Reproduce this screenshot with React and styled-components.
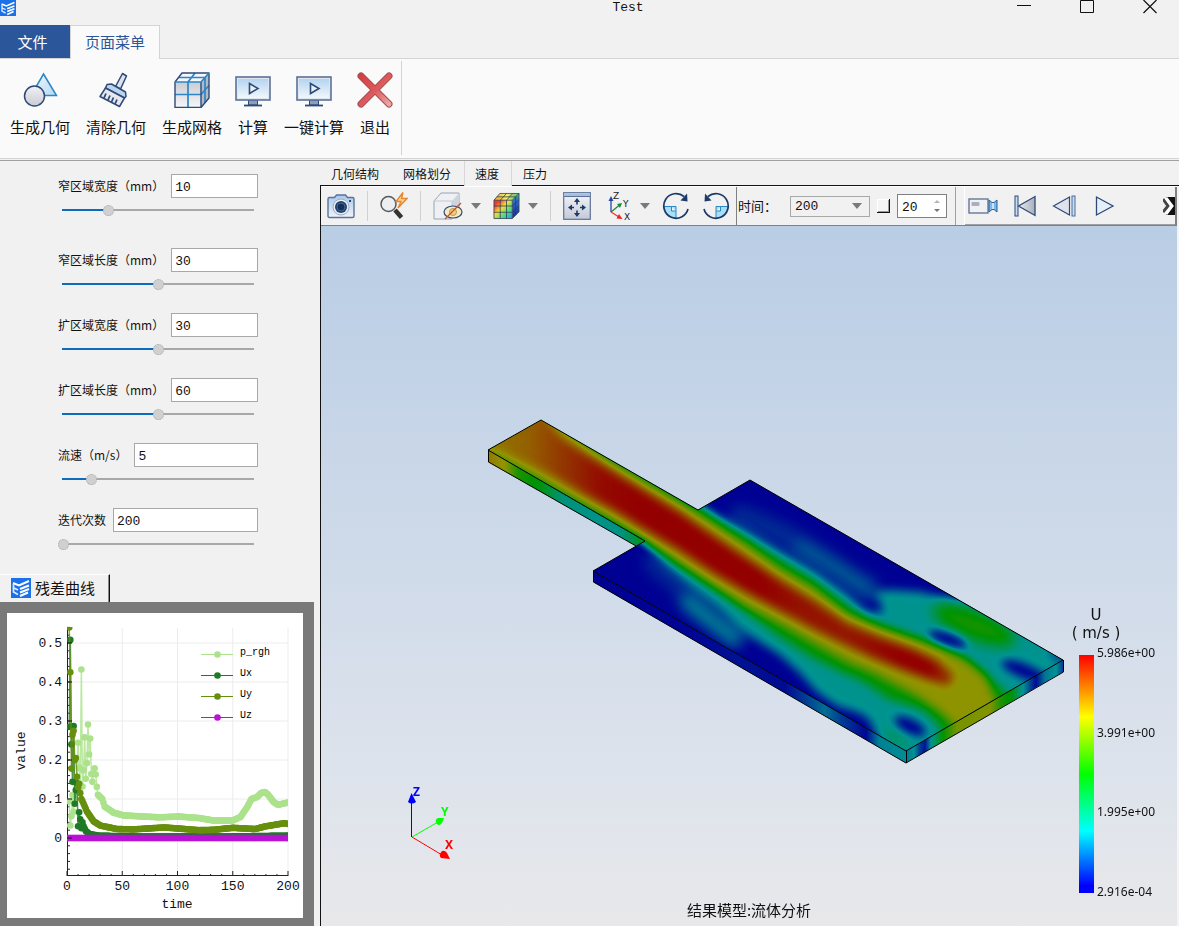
import { useState } from "react";
import styled, { createGlobalStyle } from "styled-components";

const cjk = `"Noto Sans CJK SC", "Noto Sans", sans-serif`;
const mono = `"Liberation Mono", "Noto Sans CJK SC", monospace`;
const navy = "#2f4a78";

/* ---------- ribbon icons ---------- */

function ShapesIcon() {
  return (
    <svg width="36" height="36" viewBox="0 0 36 36">
      <defs>
        <linearGradient id="tri" x1="0" y1="0" x2="1" y2="1">
          <stop offset="0" stopColor="#f4f9fd" />
          <stop offset="1" stopColor="#b5d9f3" />
        </linearGradient>
        <linearGradient id="ball" x1="0" y1="0" x2="0" y2="1">
          <stop offset="0" stopColor="#f2f2f4" />
          <stop offset="1" stopColor="#c9ccd4" />
        </linearGradient>
      </defs>
      <path d="M21.500 2 L34.500 23.500 H9 Z" fill="url(#tri)" stroke="#2b86c5" strokeWidth="1.500" />
      <circle cx="12.500" cy="24" r="10" fill="url(#ball)" stroke={navy} strokeWidth="1.500" />
    </svg>
  );
}

function BrushIcon() {
  return (
    <svg width="36" height="36" viewBox="0 0 36 36" strokeLinejoin="round">
      <path d="M24.500 1.500 L28.500 4 L22.500 17 L17.500 14.500 Z" fill="#dde3ec" stroke={navy} strokeWidth="1.500" />
      <path d="M9 12.500 L13.500 12 L27.500 20 L28 24.500 L26.500 26 L7.500 16 Z" fill="#b9d4ee" stroke={navy} strokeWidth="1.500" />
      <path d="M7.500 16 L26.500 26 L21.500 34.500 L2 24.500 Z" fill="#e6e8ee" stroke={navy} strokeWidth="1.500" />
      <path d="M6 26 L8 21.500 M10 28 L12 23.500 M13.500 30 L15.500 25.500 M17 32 L19 27.500" stroke={navy} strokeWidth="1.800" />
    </svg>
  );
}

function MeshIcon() {
  return (
    <svg width="36" height="36" viewBox="0 0 36 36" strokeLinejoin="round">
      <defs>
        <linearGradient id="mesh" x1="0" y1="0" x2="0" y2="1">
          <stop offset="0" stopColor="#c9ccd4" />
          <stop offset="1" stopColor="#f6f7f9" />
        </linearGradient>
      </defs>
      <path d="M1 10 L8 1 H35 L27 10 Z" fill="#f4f6f9" />
      <path d="M27 10 L35 1 V26 L27 35.500 Z" fill="#b4bac6" />
      <path d="M1 10 H27 V35.500 H1 Z" fill="url(#mesh)" />
      <path d="M1 22.500 H27 L35 13.500 M14 35.500 V10 L21 1 M5 5.500 H31 V31" fill="none" stroke="#2b86c5" strokeWidth="1.700" />
      <path d="M1 10 L8 1 H35 V26 L27 35.500 H1 Z M27 10 V35.500" fill="none" stroke={navy} strokeWidth="1.400" />
      <path d="M1 10 H27 L35 1" fill="none" stroke="#2b86c5" strokeWidth="1.700" />
    </svg>
  );
}

function MonitorIcon() {
  return (
    <svg width="36" height="36" viewBox="0 0 36 36">
      <defs>
        <linearGradient id="screen" x1="0" y1="0" x2="0" y2="1">
          <stop offset="0" stopColor="#b4d4f0" />
          <stop offset="1" stopColor="#f1f7fc" />
        </linearGradient>
      </defs>
      <path d="M13.500 28 H22.500 V33 H13.500 Z" fill="#8e9db8" stroke={navy} />
      <path d="M9 33.500 H27" stroke={navy} strokeWidth="1.800" />
      <rect x="1" y="5" width="34" height="23" fill="#dfe5ee" stroke="#5b7299" strokeWidth="1.600" />
      <rect x="3" y="7" width="30" height="19" fill="url(#screen)" />
      <path d="M14.500 11.500 L23 16.500 L14.500 21.500 Z" fill="#e9f2fa" stroke={navy} strokeWidth="1.600" />
    </svg>
  );
}

function CrossIcon() {
  return (
    <svg width="36" height="36" viewBox="0 0 36 36" strokeLinecap="round">
      <defs>
        <linearGradient id="cross" gradientUnits="userSpaceOnUse" x1="4" y1="0" x2="34" y2="30">
          <stop offset="0" stopColor="#d33c40" />
          <stop offset="0.550" stopColor="#dd5a5c" />
          <stop offset="1" stopColor="#eba6a6" />
        </linearGradient>
      </defs>
      <path d="M4 4 L32 32 M32 4 L4 32" stroke="#a84c50" strokeWidth="7" />
      <path d="M4 4 L32 32 M32 4 L4 32" stroke="url(#cross)" strokeWidth="5" />
    </svg>
  );
}

function LogoIcon({ size }) {
  return (
    <svg width={size} height={size} viewBox="0 0 20 20">
      <rect width="20" height="20" fill="#1b72e8" />
      <path d="M2 5 L8 7.500 L18 3 M9 11 L18 7.500 M9 14.500 L18 11 M9 18 L17 14.500" stroke="#fff" strokeWidth="2" fill="none" />
      <path d="M2.500 6 V14 L7 16.500 M3 10 L7 12" stroke="#dfeafc" strokeWidth="1.700" fill="none" />
    </svg>
  );
}

/* ---------- toolbar icons ---------- */

function CameraIcon() {
  return (
    <svg width="28" height="28" viewBox="0 0 28 28">
      <defs>
        <linearGradient id="cam" x1="0" y1="0" x2="0" y2="1">
          <stop offset="0" stopColor="#a9c8ea" />
          <stop offset="1" stopColor="#eef4fb" />
        </linearGradient>
      </defs>
      <path d="M1 7 Q1 5.500 2.500 5.500 H7.500 L9.500 3 H18.500 L20.500 5.500 H25.500 Q27 5.500 27 7 V24 Q27 25.500 25.500 25.500 H2.500 Q1 25.500 1 24 Z" fill="url(#cam)" stroke="#5b7299" strokeWidth="1.400" />
      <circle cx="14" cy="15" r="8" fill="#e9eef5" stroke="#9aabc4" />
      <circle cx="14" cy="15" r="6" fill="#1c3f6e" />
      <circle cx="14" cy="15" r="4" fill="#16305a" stroke="#44699a" />
      <rect x="22" y="8" width="2" height="2" fill="#2a4674" />
    </svg>
  );
}

function ZoomIcon() {
  return (
    <svg width="28" height="28" viewBox="0 0 28 28">
      <path d="M15 18 L21.500 25.500" stroke="#333" strokeWidth="4.500" />
      <circle cx="8.500" cy="12" r="7.500" fill="#eceef0" stroke="#555a60" strokeWidth="1.500" />
      <path d="M23 .5 L16 9.500 H21 L18 16 L27 6.500 H21.500 Z" fill="#fbd79a" stroke="#e8862a" strokeWidth="1.400" />
    </svg>
  );
}

function HiddenCubeIcon() {
  return (
    <svg width="30" height="28" viewBox="0 0 30 28" strokeLinejoin="round">
      <path d="M1 9 L8 1 H26 V20 L19 27 H1 Z" fill="#eef0f3" stroke="#9aa3b3" />
      <path d="M19 9 L26 1 V20 L19 27 Z" fill="#cfd4dc" />
      <path d="M1 9 H19 V27" fill="none" stroke="#c3c9d4" />
      <ellipse cx="20" cy="20" rx="9" ry="6" fill="#f9e7bd" stroke={navy} strokeWidth="1.200" />
      <circle cx="20" cy="20" r="3.500" fill="#f0cf7e" stroke="#b59a56" />
      <path d="M12 27 L28 11" stroke="#c9502f" strokeWidth="1.300" />
    </svg>
  );
}

function FieldCubeIcon() {
  return (
    <svg width="27" height="28" viewBox="0 0 28 28">
      <defs>
        <linearGradient id="cubeFront" x1="0" y1="0" x2="1" y2="1">
          <stop offset="0.150" stopColor="#e83c2e" />
          <stop offset="0.420" stopColor="#f6dc3a" />
          <stop offset="0.650" stopColor="#5fdc78" />
          <stop offset="0.950" stopColor="#23a4e8" />
        </linearGradient>
        <linearGradient id="cubeTop" x1="0" y1="0" x2="1" y2="0">
          <stop offset="0" stopColor="#f0a02c" />
          <stop offset="0.500" stopColor="#f6ee72" />
          <stop offset="1" stopColor="#4cb868" />
        </linearGradient>
        <linearGradient id="cubeSide" x1="0" y1="0" x2="0" y2="1">
          <stop offset="0" stopColor="#42b86a" />
          <stop offset="0.300" stopColor="#2a6fd8" />
          <stop offset="1" stopColor="#1426a0" />
        </linearGradient>
      </defs>
      <path d="M1 8 L7 1 H27 L20 8 Z" fill="url(#cubeTop)" />
      <path d="M20 8 L27 1 V20 L20 27 Z" fill="url(#cubeSide)" />
      <path d="M1 8 H20 V27 H1 Z" fill="url(#cubeFront)" />
      <path d="M1 8 L7 1 H27 V20 L20 27 H1 Z M1 8 H20 L27 1 M20 8 V27 M1 14 H20 L27 7.500 M1 20.500 H20 L27 14 M7.500 27 V8 L14 1 M14 27 V8 L20.500 1 M4 4.500 H23.500 V23.500" fill="none" stroke="#2c3b52" strokeWidth=".8" />
    </svg>
  );
}

function FitIcon() {
  return (
    <svg width="28" height="28" viewBox="0 0 28 28">
      <defs>
        <linearGradient id="fit" x1="0" y1="0" x2="0" y2="1">
          <stop offset="0" stopColor="#f5f6f8" />
          <stop offset="1" stopColor="#c3c9d6" />
        </linearGradient>
      </defs>
      <rect x=".7" y=".7" width="26.600" height="26.600" fill="url(#fit)" stroke="#5b7299" strokeWidth="1.200" />
      <rect x="1.500" y="1.500" width="25" height="2.500" fill="#a9bedd" />
      <path d="M1 4.500 H27" stroke="#5b7299" />
      <path d="M14 6 L17 10 H11 Z M14 25 L17 21 H11 Z M5 15.500 L9 12.500 V18.500 Z M23 15.500 L19 12.500 V18.500 Z" fill="#1d3a68" />
      <path d="M14 9 V12.500 M14 18.500 V22 M8 15.500 H11 M17 15.500 H20" stroke="#1d3a68" strokeWidth="1.600" />
    </svg>
  );
}

function AxesIcon() {
  return (
    <svg width="29" height="34" viewBox="0 0 29 34">
      <path d="M8 23 V10" stroke="#2347a8" strokeWidth="1.300" />
      <path d="M8 7 L10.500 12 H5.500 Z" fill="#2347a8" />
      <path d="M8 23 L16 16.500" stroke="#1d8a3c" strokeWidth="1.300" />
      <path d="M19 14 L17 19 L14 15 Z" fill="#1d8a3c" />
      <path d="M8 23 L16 28" stroke="#e33" strokeWidth="1.300" />
      <path d="M19.500 30 L13.500 29.500 L16 25 Z" fill="#e22" />
      <g fill="#222" fontFamily="DejaVu Sans, sans-serif" fontSize="9">
        <text x="10" y="10">Z</text>
        <text x="20" y="18">Y</text>
        <text x="21" y="31">X</text>
      </g>
    </svg>
  );
}

function RotateIcon({ flip }) {
  return (
    <svg width="28" height="28" viewBox="0 0 28 28">
      <g transform={flip ? "matrix(-1 0 0 1 28 0)" : undefined}>
        <path d="M2 14.500 H14 V26 A12 12 0 0 1 2 14.500 Z" fill="#a9defa" stroke="#2b86c5" />
        <path d="M9.500 14.500 V19 H14" fill="#e4f5fd" stroke="#2b86c5" />
        <path d="M26 17 A12.300 12.300 0 1 1 22 4.500" fill="none" stroke="#1d3a68" strokeWidth="1.700" />
        <path d="M25.500 9.500 L18.500 8.500 L25 1.500 Z" fill="#1d3a68" />
      </g>
    </svg>
  );
}

function VideoIcon() {
  return (
    <svg width="30" height="20" viewBox="0 0 30 20">
      <rect x="1" y="3" width="19" height="14" fill="#f0f1f4" stroke="#5b6f93" strokeWidth="1.300" />
      <rect x="3.500" y="6" width="8" height="4" rx="1" fill="#aab0ba" />
      <path d="M21 4 L24 6.500 H26 L29 4 V16 L26 13.500 H24 L21 16 Z" fill="#7ab8ec" stroke="#2b5f96" />
      <path d="M25 7 V13" stroke="#e6f4ff" strokeWidth="1.500" />
    </svg>
  );
}

function FirstIcon() {
  return (
    <svg width="22" height="22" viewBox="0 0 22 22">
      <defs>
        <linearGradient id="first" x1="0" y1="0" x2="1" y2="0">
          <stop offset="0" stopColor="#e9ebef" />
          <stop offset="1" stopColor="#a9afbb" />
        </linearGradient>
      </defs>
      <rect x="1" y="1" width="3" height="20" fill="#c9dcf1" stroke={navy} />
      <path d="M21 1.500 V20.500 L4.500 11 Z" fill="url(#first)" stroke={navy} strokeWidth="1.300" />
    </svg>
  );
}

function PrevIcon() {
  return (
    <svg width="24" height="22" viewBox="0 0 24 22">
      <path d="M17.500 2 V20 L1.500 11 Z" fill="#dfe4ec" stroke={navy} strokeWidth="1.200" />
      <rect x="20" y="1" width="3" height="20" fill="#c9dcf1" stroke="#4c6c9c" />
    </svg>
  );
}

function PlayIcon() {
  return (
    <svg width="24" height="22" viewBox="0 0 24 22">
      <path d="M4.500 2 V20 L21 11 Z" fill="#e6f0fa" stroke={navy} strokeWidth="1.300" />
    </svg>
  );
}

function MoreIcon() {
  return (
    <svg width="12" height="18" viewBox="0 0 12 18">
      <path d="M0 2 L5 9 L0 15" fill="none" stroke="#444" strokeWidth="3" />
      <path d="M3 0 H12 V18 H3 L9 9 Z" fill="#111" />
      <path d="M3 1 L9 9 L3 17" fill="none" stroke="#fff" strokeWidth="3" />
    </svg>
  );
}

function Caret() {
  return (
    <svg width="10" height="6" viewBox="0 0 10 6">
      <path d="M0 0 H10 L5 6 Z" fill="#7a7a7a" />
    </svg>
  );
}

/* ---------- residual chart ---------- */

const series = [
  {
    name: "p_rgh",
    color: "#abe28b",
    points: [
      [2, 0.094], [3, 0.032], [4, 0.056], [5, 0.11], [6, 0.067], [7, 0.1], [8, 0.12], [9, 0.15],
      [10, 0.244], [11, 0.18], [12, 0.13], [13, 0.432], [14, 0.132], [15, 0.174], [16, 0.258],
      [17, 0.152], [18, 0.192], [19, 0.291], [20, 0.214], [21, 0.255], [22, 0.164], [23, 0.144],
      [24, 0.165], [25, 0.179], [26, 0.163], [27, 0.131], [28, 0.111], [30, 0.105], [32, 0.1],
      [34, 0.081], [42, 0.065], [51, 0.058], [69, 0.055], [84, 0.053], [101, 0.055], [120, 0.051],
      [132, 0.045], [150, 0.045], [157, 0.054], [163, 0.079], [167, 0.1], [172, 0.105],
      [176, 0.116], [179, 0.118], [182, 0.111], [187, 0.092], [191, 0.085], [200, 0.091],
    ],
  },
  {
    name: "Ux",
    color: "#1f7a26",
    points: [
      [2, 0.285], [3, 0.508], [4, 0.24], [5, 0.144], [6, 0.287], [7, 0.088], [8, 0.123], [9, 0.14],
      [10, 0.03], [11, 0.066], [12, 0.048], [13, 0.025], [14, 0.04], [15, 0.03], [17, 0.018],
      [20, 0.011], [28, 0.006], [60, 0.004], [150, 0.004], [200, 0.006],
    ],
  },
  {
    name: "Uy",
    color: "#668f0d",
    points: [
      [2, 0.54], [3, 0.425], [4, 0.178], [5, 0.265], [6, 0.275], [7, 0.2], [8, 0.205], [9, 0.157],
      [10, 0.13], [11, 0.139], [12, 0.115], [13, 0.1], [15, 0.088], [18, 0.068], [24, 0.043],
      [30, 0.032], [45, 0.023], [60, 0.022], [88, 0.027], [120, 0.02], [133, 0.021], [150, 0.026],
      [170, 0.023], [180, 0.03], [197, 0.038], [200, 0.036],
    ],
  },
  { name: "Uz", color: "#b814d4", points: [[0, 0], [200, 0]] },
];

const px = (t) => 60 + t * 1.105;
const py = (v) => 225 - v * 390;

// one sample per iteration
function sample(points) {
  const out = [];
  for (let i = 0; i < points.length - 1; i++) {
    const [t0, v0] = points[i];
    const [t1, v1] = points[i + 1];
    for (let t = t0; t < t1; t++) {
      out.push([t, v0 + ((v1 - v0) * (t - t0)) / (t1 - t0)]);
    }
  }
  out.push(points[points.length - 1]);
  return out;
}

function ResidualChart() {
  const xTicks = [0, 50, 100, 150, 200];
  const yTicks = [0, 0.1, 0.2, 0.3, 0.4, 0.5];
  const minorX = Array.from({ length: 21 }, (_, i) => i * 10);
  const minorY = Array.from({ length: 32 }, (_, i) => -0.08 + i * 0.02);

  return (
    <ChartSvg viewBox="0 0 296 305" preserveAspectRatio="xMidYMid meet">
      <clipPath id="plot">
        <rect x="60" y="14" width="221" height="249" />
      </clipPath>
      <g stroke="#ececec">
        {xTicks.slice(1).map((t) => (
          <path key={t} d={`M${px(t)} 15 V263`} />
        ))}
        {yTicks.map((v) => (
          <path key={v} d={`M60 ${py(v)} H281`} />
        ))}
      </g>
      <g stroke="#222">
        <path d="M60.500 14 V263" />
        <path d="M60 262.500 H281" />
        {minorX.map((t) => (
          <path key={t} d={`M${px(t)} 263 v${t % 50 ? -2 : -5}`} />
        ))}
        {minorY.map((v) => (
          <path key={v} d={`M60 ${py(v)} h3`} />
        ))}
      </g>
      <g clipPath="url(#plot)">
        {series.map((s) => {
          const pts = sample(s.points);
          return (
            <g key={s.name} fill={s.color} stroke={s.color}>
              <polyline
                points={pts.map(([t, v]) => `${px(t)},${py(v)}`).join(" ")}
                fill="none"
                strokeWidth="1.500"
                strokeOpacity=".8"
              />
              {pts.map(([t, v]) => (
                <circle key={t} cx={px(t)} cy={py(v)} r="3.300" stroke="none" />
              ))}
            </g>
          );
        })}
      </g>
      <g stroke="#111">
        {yTicks.map((v) => (
          <path key={v} d={`M60 ${py(v)} h5`} />
        ))}
      </g>
      <g fontFamily="Liberation Mono, monospace" fontSize="13" fill="#111">
        {yTicks.map((v) => (
          <text key={v} x="55" y={py(v) + 4} textAnchor="end">
            {v}
          </text>
        ))}
        {xTicks.map((t) => (
          <text key={t} x={px(t)} y="277" textAnchor="middle">
            {t}
          </text>
        ))}
        <text x="170" y="295" textAnchor="middle">
          time
        </text>
        <text transform="translate(18 138) rotate(-90)" textAnchor="middle">
          value
        </text>
      </g>
      {series.map((s, i) => (
        <g key={s.name}>
          <path d={`M194 ${41.5 + i * 21} h32`} stroke={s.color} />
          <circle cx="210.500" cy={41.5 + i * 21} r="3.300" fill={s.color} />
          <text x="233" y={42 + i * 21} fontFamily="Liberation Mono, monospace" fontSize="10" fill="#000">
            {s.name}
          </text>
        </g>
      ))}
    </ChartSvg>
  );
}

/* ---------- velocity field ---------- */

// The field is painted as a 0..1 grey scalar, a component transfer turns it into the colour map.
const level = (s) => {
  const v = Math.round(s * 255);
  return `rgb(${v},${v},${v})`;
};

function Ramp({ id, x1, x2, stops }) {
  return (
    <linearGradient id={id} gradientUnits="userSpaceOnUse" x1={x1} y1="0" x2={x2} y2="0">
      {stops.map(([x, s]) => (
        <stop key={x} offset={(x - x1) / (x2 - x1)} stopColor={level(s)} />
      ))}
    </linearGradient>
  );
}

function Blur({ id, size }) {
  return (
    <filter id={id} filterUnits="userSpaceOnUse" x="440" y="380" width="680" height="420" colorInterpolationFilters="sRGB">
      <feGaussianBlur stdDeviation={size} />
    </filter>
  );
}

const cyanZone =
  "647,541 698,504 720,517 747,531 780,551 813,570 847,594 866,611 884,613 880,602 872,592 890,590 920,592 953,600 975,604 1080,655 906,770 884,748 877,735 868,718 857,712 837,706 817,692 800,673 780,655 740,629 720,609 693,588 667,566";
const greenZone =
  "470,450 541,405 598,442 640,468 698,508 720,524 747,540 780,560 813,580 847,606 867,620 897,631 927,642 960,655 982,671 1000,687 1030,715 950,760 940,726 925,711 905,704 888,699 873,688 860,680 847,675 813,658 780,637 747,612 720,591 693,571 667,552 645,540 560,500 480,460";
const yellowZone =
  "470,450 541,405 570,433 607,459 647,483 680,502 713,522 747,544 780,568 813,587 847,613 880,627 913,638 940,647 967,661 985,676 993,694 1004,720 960,745 953,724 940,712 920,698 900,687 873,673 847,662 813,643 780,624 747,607 713,586 680,565 647,542 613,521 580,502 530,474 490,453";
const redZone =
  "470,446 541,412 560,436 580,450 613,471 647,492 680,512 713,535 747,558 780,580 813,600 847,623 880,637 913,649 938,661 955,676 948,686 927,679 900,669 873,658 847,646 813,629 780,611 747,593 713,573 680,551 647,531 613,510 580,492 547,473 500,450";

function FlowModel() {
  return (
    <ModelSvg viewBox="321 226 856 700" preserveAspectRatio="xMidYMid meet">
      <defs>
        <filter id="jet" filterUnits="userSpaceOnUse" x="480" y="410" width="600" height="370" colorInterpolationFilters="sRGB">
          <feComponentTransfer>
            <feFuncR type="table" tableValues="0 0 0 .58 .58" />
            <feFuncG type="table" tableValues="0 .58 .58 .58 0" />
            <feFuncB type="table" tableValues=".58 .58 0 0 0" />
          </feComponentTransfer>
        </filter>
        <Blur id="b4" size="4" />
        <Blur id="b5" size="5" />
        <Blur id="b7" size="7" />
        <clipPath id="top">
          <path d="M488 450 L541 420 L698 510 L750 480 L1063 660 L906 751 L593 571 L645 541 Z" />
        </clipPath>
        <Ramp id="core" x1={490} x2={960} stops={[[490, 0.8], [530, 0.84], [560, 0.9], [600, 0.98], [640, 1], [760, 1], [800, 0.97], [850, 0.96], [900, 1], [930, 1], [960, 0.86]]} />
        <Ramp id="inletSide" x1={488} x2={645} stops={[[488, 0.8], [505, 0.74], [518, 0.55], [540, 0.48], [562, 0.3], [590, 0.27], [620, 0.28], [638, 0.42], [645, 0.45]]} />
        <Ramp id="frontSide" x1={593} x2={906} stops={[[593, 0], [690, 0.01], [740, 0.03], [785, 0.02], [805, 0.1], [825, 0.19], [842, 0.1], [866, 0.01], [879, 0.22], [906, 0.24]]} />
        <Ramp
          id="outletSide"
          x1={906}
          x2={1063}
          stops={[[906, 0.2], [914, 0.25], [920, 0.1], [925, 0.03], [931, 0.25], [943, 0.5], [957, 0.7], [990, 0.72], [1001, 0.55], [1012, 0.48], [1022, 0.27], [1031, 0.1], [1036, 0.02], [1045, 0.2], [1056, 0.25], [1063, 0.1]]}
        />
      </defs>
      <g filter="url(#jet)">
        <path d="M488 450 L645 541 L636 546 L488 462 Z" fill="url(#inletSide)" />
        <path d="M593 571 L906 751 V763 L593 582 Z" fill="url(#frontSide)" />
        <path d="M906 751 L1063 660 V672 L906 763 Z" fill="url(#outletSide)" />
        <g clipPath="url(#top)">
          <rect x="480" y="410" width="600" height="370" fill={level(0)} />
          <g filter="url(#b7)" fill="none" strokeLinecap="round">
            <path d="M740 517 Q780 530 820 558 T868 588" stroke={level(0.07)} strokeWidth="24" />
            <path d="M800 548 Q825 560 868 590" stroke={level(0.16)} strokeWidth="14" />
            <path d="M656 562 Q690 592 735 635" stroke={level(0.07)} strokeWidth="24" />
            <path d="M688 602 Q704 616 734 638" stroke={level(0.22)} strokeWidth="16" />
          </g>
          <polygon points={cyanZone} fill={level(0.26)} filter="url(#b5)" />
          <g filter="url(#b7)">
            <ellipse cx="974" cy="625" rx="44" ry="14" transform="rotate(22 974 625)" fill={level(0.54)} />
            <ellipse cx="896" cy="737" rx="14" ry="5" transform="rotate(20 896 737)" fill={level(0.38)} />
          </g>
          <polygon points={greenZone} fill={level(0.5)} filter="url(#b5)" />
          <polygon points={yellowZone} fill={level(0.74)} filter="url(#b5)" />
          <polygon points={redZone} fill="url(#core)" filter="url(#b5)" />
          <g filter="url(#b4)">
            <ellipse cx="948" cy="639" rx="20" ry="6" transform="rotate(20 948 639)" fill={level(0)} />
            <ellipse cx="1024" cy="671" rx="24" ry="7" transform="rotate(22 1024 671)" fill={level(0)} />
            <ellipse cx="910" cy="726" rx="17" ry="7" transform="rotate(27 910 726)" fill={level(0)} />
            <ellipse cx="1058" cy="657" rx="10" ry="3" transform="rotate(30 1058 657)" fill={level(0.05)} />
          </g>
        </g>
      </g>
      <g fill="none" stroke="#000">
        <path d="M488 450 L541 420 L698 510 L750 480 L1063 660 L906 751 L593 571 L645 541 Z" />
        <path d="M488.500 450 V462 L636 546 M593.500 571 V582 L906 763 L1063.500 672 V660 M906.500 751 V763" />
      </g>
      <g>
        <path d="M411.500 837 V800" stroke="#00f" />
        <path d="M411.500 793 L408 802 Q411.500 805 416 802 Z" fill="#00f" />
        <path d="M412 837 L438 822" stroke="#0f0" />
        <path d="M444 818 L442 823 Q439 827 436 823 Q435 819 438 818 Z" fill="#0f0" />
        <path d="M412 837 L442 855" stroke="#f00" />
        <path d="M450 859 L441 858 Q438 855 442 851 Q445 850 447 853 Z" fill="#f00" />
      </g>
      <g fontFamily="Noto Sans, sans-serif" fontSize="12" fontWeight="700">
        <text x="413" y="796" fill="#00f">Z</text>
        <text x="441" y="816" fill="#0f0">Y</text>
        <text x="445" y="849" fill="#f00">X</text>
      </g>
    </ModelSvg>
  );
}

/* ---------- page ---------- */

const commands = [
  { label: "生成几何", icon: <ShapesIcon /> },
  { label: "清除几何", icon: <BrushIcon /> },
  { label: "生成网格", icon: <MeshIcon /> },
  { label: "计算", icon: <MonitorIcon /> },
  { label: "一键计算", icon: <MonitorIcon /> },
  { label: "退出", icon: <CrossIcon /> },
];

const params = [
  { id: "narrowWidth", label: "窄区域宽度（mm）", value: "10", position: 24 },
  { id: "narrowLength", label: "窄区域长度（mm）", value: "30", position: 50 },
  { id: "wideWidth", label: "扩区域宽度（mm）", value: "30", position: 50 },
  { id: "wideLength", label: "扩区域长度（mm）", value: "60", position: 50 },
  { id: "speed", label: "流速（m/s）", value: "5", position: 15 },
  { id: "iterations", label: "迭代次数", value: "200", position: 0 },
];

function ParamField({ id, label, value, position }) {
  const [text, setText] = useState(value);
  const [pos, setPos] = useState(position);

  return (
    <Field>
      <FieldRow>
        <label htmlFor={id}>{label}</label>
        <TextInput id={id} value={text} onChange={(e) => setText(e.target.value)} />
      </FieldRow>
      <Slider
        type="range"
        aria-label={label}
        value={pos}
        onChange={(e) => setPos(e.target.value)}
        style={{ "--pos": `${pos}%` }}
      />
    </Field>
  );
}

function App() {
  const [tab, setTab] = useState("速度");

  return (
    <Window>
      <GlobalStyle />
      <TitleBar>
        <LogoIcon size={16} />
        <h1>Test</h1>
        <WindowButton aria-label="minimize">
          <svg width="14" height="14" viewBox="0 0 14 14"><path d="M0 5.500 H14" stroke="#111" /></svg>
        </WindowButton>
        <WindowButton aria-label="maximize">
          <svg width="14" height="14" viewBox="0 0 14 14"><path d="M.5 .5 H13.500 V12.500 H.5 Z" fill="none" stroke="#111" /></svg>
        </WindowButton>
        <WindowButton aria-label="close">
          <svg width="14" height="14" viewBox="0 0 14 14"><path d="M.5 0 L13.500 13 M13.500 0 L.5 13" stroke="#111" strokeWidth="1.200" /></svg>
        </WindowButton>
      </TitleBar>
      <RibbonTabs>
        <FileButton>文件</FileButton>
        <MenuTab>页面菜单</MenuTab>
      </RibbonTabs>
      <Ribbon>
        <RibbonGroup>
          {commands.map((c) => (
            <Command key={c.label}>
              {c.icon}
              <span>{c.label}</span>
            </Command>
          ))}
        </RibbonGroup>
      </Ribbon>
      <Body>
        <Side>
          <Params>
            {params.map((p) => (
              <ParamField key={p.id} {...p} />
            ))}
          </Params>
          <DockTabs>
            <DockTab>
              <LogoIcon size={20} />
              残差曲线
            </DockTab>
          </DockTabs>
          <ChartDock>
            <ResidualChart />
          </ChartDock>
        </Side>
        <Main>
          <ViewTabs>
            {["几何结构", "网格划分", "速度", "压力"].map((t) => (
              <ViewTab key={t} $active={t === tab} onClick={() => setTab(t)}>
                {t}
              </ViewTab>
            ))}
          </ViewTabs>
          <View>
            <Toolbar>
              <ToolGroup>
                <Tool aria-label="snapshot"><CameraIcon /></Tool>
                <Separator />
                <Tool aria-label="zoom"><ZoomIcon /></Tool>
                <Separator />
                <Tool aria-label="visibility"><HiddenCubeIcon /><Caret /></Tool>
                <Tool aria-label="colour field"><FieldCubeIcon /><Caret /></Tool>
                <Separator />
                <Tool aria-label="fit view"><FitIcon /></Tool>
                <Tool aria-label="orientation"><AxesIcon /><Caret /></Tool>
                <Tool aria-label="rotate clockwise"><RotateIcon /></Tool>
                <Tool aria-label="rotate counterclockwise"><RotateIcon flip /></Tool>
              </ToolGroup>
              <TimeGroup>
                <label htmlFor="time">时间：</label>
                <SelectBox>
                  <select id="time" defaultValue="200">
                    <option>200</option>
                    <option>100</option>
                  </select>
                  <Caret />
                </SelectBox>
                <CheckBox type="checkbox" aria-label="loop" />
                <Spin>
                  <input aria-label="frames" defaultValue="20" />
                  <svg width="6" height="14" viewBox="0 0 6 14">
                    <path d="M0 4 H6 L3 1 Z" fill="#b5b5b5" />
                    <path d="M0 10 H6 L3 13 Z" fill="#777" />
                  </svg>
                </Spin>
              </TimeGroup>
              <PlayGroup>
                <Tool aria-label="record"><VideoIcon /></Tool>
                <Tool aria-label="first frame"><FirstIcon /></Tool>
                <Tool aria-label="previous frame"><PrevIcon /></Tool>
                <Tool aria-label="play"><PlayIcon /></Tool>
                <MoreTool aria-label="more"><MoreIcon /></MoreTool>
              </PlayGroup>
            </Toolbar>
            <Viewport>
              <FlowModel />
              <Legend>
                <LegendTitle>
                  <span>U</span>
                  <span>( m/s )</span>
                </LegendTitle>
                <LegendScale>
                  <ColorBar />
                  <LegendValues>
                    <span>5.986e+00</span>
                    <span>3.991e+00</span>
                    <span>1.995e+00</span>
                    <span>2.916e-04</span>
                  </LegendValues>
                </LegendScale>
              </Legend>
              <Caption>结果模型:流体分析</Caption>
            </Viewport>
          </View>
        </Main>
      </Body>
    </Window>
  );
}

const GlobalStyle = createGlobalStyle`
  * {
    box-sizing: border-box;
  }
  body {
    margin: 0;
    background: #f1f1f1;
    color: #111;
    font: 12px/16px ${cjk};
  }
  button {
    border: none;
    padding: 0;
    background: none;
    color: inherit;
    font: inherit;
    cursor: pointer;
  }
  svg {
    display: block;
    flex: none;
  }
`;

const Window = styled.div`
  display: flex;
  flex-direction: column;
  min-height: 100vh;
`;

const TitleBar = styled.header`
  display: flex;
  align-items: flex-start;
  height: 25px;
  h1 {
    flex: 1;
    margin: 0;
    padding-left: 250px;
    text-align: center;
    font: 13px/16px ${mono};
  }
`;

const WindowButton = styled.button`
  display: flex;
  justify-content: center;
  width: 63px;
  padding-left: 4px;
`;

const RibbonTabs = styled.nav`
  display: flex;
  height: 34px;
  border-bottom: 1px solid #d4d4d4;
  font-size: 15px;
`;

const FileButton = styled.button`
  width: 70px;
  height: 33px;
  padding-right: 5px;
  background: #2b579a;
  color: #fff;
`;

const MenuTab = styled.button`
  width: 90px;
  height: 34px;
  padding-bottom: 2px;
  border: 1px solid #d4d4d4;
  border-bottom: none;
  background: #fafafa;
  color: #2b579a;
`;

const Ribbon = styled.section`
  height: 102px;
  padding: 2px 0 3px;
  background: #fafafa;
  border-bottom: 1px solid #a0a0a0;
  box-shadow: inset 0 -1px #f1f1f1, inset 0 -2px #d4d4d4;
`;

const RibbonGroup = styled.div`
  display: inline-flex;
  align-items: flex-start;
  gap: 16px;
  height: 94px;
  padding: 11px 11px 0 10px;
  border-right: 1px solid #d4d4d4;
`;

const Command = styled.button`
  display: flex;
  flex-direction: column;
  align-items: center;
  gap: 9px;
  font-size: 15px;
  line-height: 20px;
  svg {
    margin: 0 -4px;
  }
`;

const Body = styled.div`
  flex: 1;
  display: grid;
  grid-template-columns: 320px 1fr;
`;

const Side = styled.aside`
  display: flex;
  flex-direction: column;
  padding-right: 6px;
`;

const Params = styled.form`
  display: flex;
  flex-direction: column;
  gap: 21px;
  width: 258px;
  padding: 13px 0 22px 58px;
`;

const Field = styled.div`
  &:first-child {
    margin-bottom: 9px;
  }
`;

const FieldRow = styled.div`
  display: flex;
  align-items: center;
  gap: 7px;
  height: 24px;
  white-space: nowrap;
`;

const TextInput = styled.input`
  flex: 1;
  min-width: 0;
  height: 24px;
  padding: 2px 3px 0;
  border: 1px solid #a8a8a8;
  background: #fff;
  color: #111;
  font: 13px/20px ${mono};
`;

const Slider = styled.input`
  appearance: none;
  display: block;
  width: 100%;
  height: 16px;
  margin: 4px 0 0;
  background: linear-gradient(90deg, #0f6cbd var(--pos), #a8a8a8 var(--pos)) center / calc(100% - 8px) 2px no-repeat;
  &::-webkit-slider-thumb {
    appearance: none;
    width: 11px;
    height: 11px;
    border: 1px dotted #a8a8a8;
    border-radius: 50%;
    background: #d0d0d0;
  }
`;

const DockTabs = styled.div`
  display: flex;
  height: 28px;
`;

const DockTab = styled.button`
  display: flex;
  align-items: center;
  gap: 4px;
  width: 110px;
  padding: 0 0 2px 11px;
  border-top: 1px solid #fff;
  border-right: 1px solid #111;
  box-shadow: inset -1px 0 #888;
  font-size: 15px;
`;

const ChartDock = styled.div`
  flex: 1;
  display: flex;
  padding: 11px 11px 8px 7px;
  background: #797979;
`;

const ChartSvg = styled.svg`
  width: 100%;
  background: #fff;
`;

const Main = styled.main`
  display: flex;
  flex-direction: column;
  min-width: 0;
`;

const ViewTabs = styled.div`
  display: flex;
  height: 25px;
  background: linear-gradient(#111, #111) bottom / 100% 1px no-repeat;
`;

const ViewTab = styled.button`
  height: 25px;
  padding: 0 12px 0 10px;
  border: solid ${(p) => (p.$active ? "#d8d8d8" : "transparent")};
  border-width: 0 1px;
  background: ${(p) => (p.$active ? "#f1f1f1" : "none")};
`;

const View = styled.section`
  flex: 1;
  display: flex;
  flex-direction: column;
  border-left: 1px solid #111;
  border-right: 2px solid #f4f4f4;
`;

const Toolbar = styled.div`
  display: flex;
  height: 40px;
  border-top: 1px solid #fff;
  border-bottom: 1px solid #808080;
`;

const ToolGroup = styled.div`
  display: flex;
  align-items: center;
  gap: 12px;
  padding: 0 6px;
  border-right: 1px solid #808080;
`;

const Tool = styled.button`
  display: flex;
  align-items: center;
  gap: 8px;
`;

const Separator = styled.span`
  width: 1px;
  height: 30px;
  background: #d0d0d0;
`;

const TimeGroup = styled.div`
  display: flex;
  align-items: center;
  gap: 7px;
  padding: 0 8px 0 1px;
  border-right: 1px solid #a0a0a0;
  white-space: nowrap;
  label {
    padding-right: 6px;
    font-size: 13px;
  }
`;

const SelectBox = styled.div`
  display: flex;
  align-items: center;
  width: 80px;
  height: 21px;
  padding-right: 7px;
  border: 1px solid #a8a8a8;
  select {
    appearance: none;
    flex: 1;
    min-width: 0;
    height: 19px;
    padding: 0 4px;
    border: none;
    background: none;
    color: #111;
    font: 13px/19px ${mono};
  }
`;

const CheckBox = styled.input`
  appearance: none;
  width: 13px;
  height: 14px;
  margin: 0;
  border: solid #111;
  border-width: 0 1px 1px 0;
  background: #f4f4f4;
  box-shadow: inset 1px 1px #fff, inset -1px -1px #999;
`;

const Spin = styled.div`
  display: flex;
  align-items: center;
  width: 50px;
  height: 24px;
  padding-right: 6px;
  border: 1px solid #808080;
  background: #fff;
  input {
    flex: 1;
    min-width: 0;
    height: 22px;
    padding: 2px 4px 0;
    border: none;
    background: none;
    color: #111;
    font: 13px/20px ${mono};
  }
`;

const PlayGroup = styled.div`
  flex: 1;
  display: flex;
  align-items: center;
  gap: 16px;
  margin-left: 8px;
  padding-left: 3px;
  border-left: 1px solid #fff;
  border-right: 2px solid #808080;
  box-shadow: inset 0 -1px #a0a0a0;
`;

const MoreTool = styled(Tool)`
  margin-left: auto;
`;

const Viewport = styled.div`
  position: relative;
  flex: 1;
  overflow: hidden;
  background: linear-gradient(#b9cde5, #dde3ec 78%, #e8e8ea);
`;

const ModelSvg = styled.svg`
  position: absolute;
  inset: 0;
  width: 100%;
  height: 100%;
`;

const Legend = styled.div`
  position: absolute;
  right: 16px;
  bottom: 26px;
  width: 84px;
  font-family: "Noto Sans", sans-serif;
`;

const LegendTitle = styled.div`
  display: flex;
  flex-direction: column;
  align-items: center;
  width: 50px;
  margin-left: -6px;
  white-space: nowrap;
  font: 15px/18px "DejaVu Sans", sans-serif;
`;

const LegendScale = styled.div`
  display: flex;
  gap: 3px;
`;

const ColorBar = styled.div`
  width: 15px;
  height: 238px;
  margin: 13px 0 7px 2px;
  background: linear-gradient(#f00, #ff0 26%, #0f0 50%, #0ff 74%, #00f 97%);
`;

const LegendValues = styled.div`
  display: flex;
  flex-direction: column;
  justify-content: space-between;
  padding-top: 3px;
`;

const Caption = styled.p`
  position: absolute;
  left: 0;
  right: 0;
  bottom: 6px;
  margin: 0;
  text-align: center;
  font-size: 15px;
  line-height: 20px;
`;

export default App;
